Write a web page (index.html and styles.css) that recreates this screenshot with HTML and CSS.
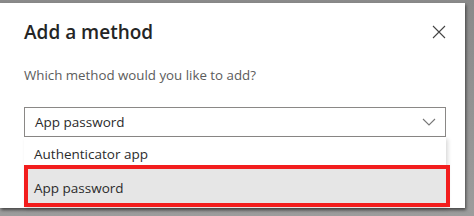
FILE: index.html
```html
<!DOCTYPE html>
<html lang="en">
<head>
    <meta charset="UTF-8">
    <meta name="viewport" content="width=device-width, initial-scale=1.0">
    <title>Add a method</title>
    <link rel="stylesheet" href="styles.css">
</head>
<body>
    <div class="dialog">
        <div class="dialog-header">
            <h1>Add a method</h1>
            <button class="close-btn" aria-label="Close">
                <svg width="14" height="14" viewBox="0 0 14 14"><path d="M1 1L13 13M13 1L1 13" stroke="#444" stroke-width="1.1" fill="none"/></svg>
            </button>
        </div>
        <p class="prompt">Which method would you like to add?</p>

        <div class="select-wrap">
            <div class="select">
                <span>App password</span>
                <svg width="14" height="8" viewBox="0 0 14 8"><path d="M1 1L7 7L13 1" stroke="#777" stroke-width="1.1" fill="none"/></svg>
            </div>
            <div class="menu">
                <div class="option">Authenticator app</div>
                <div class="option selected">App password</div>
            </div>
        </div>
    </div>
</body>
</html>
```

FILE: styles.css
```css
html {
    background: linear-gradient(#8a8a8a, #9c9c9c);
}
body {
    margin: 0;
    padding-top: 3px;
    height: 213px;
    overflow: hidden;
    font-family: "Open Sans", "Segoe UI", Arial, sans-serif;
}
.dialog {
    box-sizing: border-box;
    width: 465px;
    height: 205px;
    background: #fff;
    padding: 0 19px 0 24px;
    box-shadow: 1px 2px 3px rgba(0,0,0,0.55);
}
.dialog-header {
    display: flex;
    justify-content: space-between;
    align-items: center;
    padding-top: 16px;
}
h1 {
    margin: 0;
    font-size: 19px;
    line-height: 26px;
    font-weight: 600;
    color: #252525;
}
.close-btn {
    background: none;
    border: none;
    padding: 0;
    width: 14px;
    height: 14px;
    display: flex;
}
.prompt {
    margin: 20px 0 0;
    font-size: 13.3px;
    line-height: 20px;
    color: #5c5c5c;
}
.select-wrap {
    position: relative;
    margin-top: 22px;
}
.select {
    box-sizing: border-box;
    display: flex;
    justify-content: space-between;
    align-items: center;
    height: 30px;
    border: 1px solid #8a8886;
    padding: 0 9px 0 10px;
    font-size: 13.5px;
    color: #2b2b2b;
}
.menu {
    position: absolute;
    top: 30px;
    left: 0;
    right: 0;
    background: #fff;
    box-shadow: 2px 2px 4px rgba(0,0,0,0.15);
}
.option {
    padding: 6px 10px 0;
    height: 22px;
    line-height: 22px;
    font-size: 13.5px;
    color: #2b2b2b;
}
.selected {
    background: #e6e6e6;
    outline: 4px solid #f21d1d;
    outline-offset: -4px;
    margin-right: -4px;
    padding-top: 4px;
    height: 38px;
    line-height: 38px;
}
```
